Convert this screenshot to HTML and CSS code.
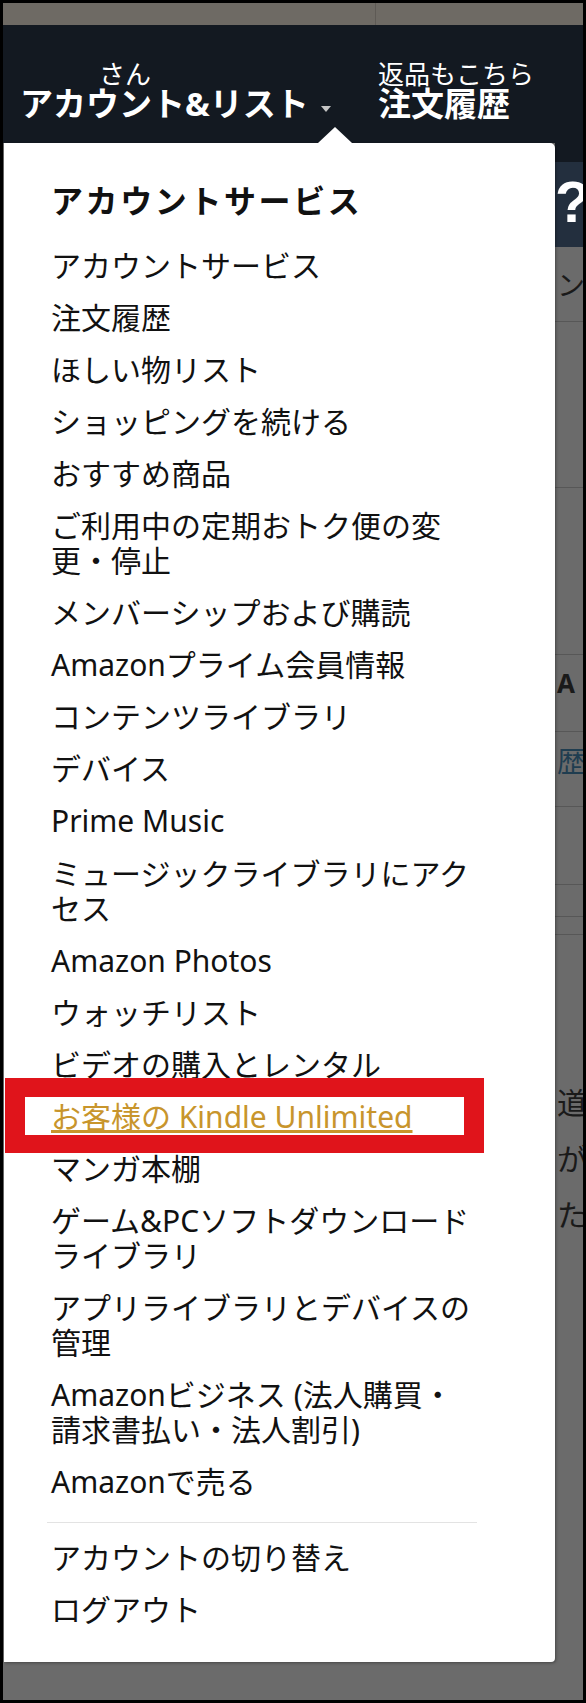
FILE: index.html
```html
<!DOCTYPE html>
<html lang="ja">
<head>
<meta charset="utf-8">
<title>アカウントサービス</title>
<link rel="stylesheet" href="styles.css">
</head>
<body>
<div class="screen">
  <div class="topstrip"><div class="topstrip-a"></div><div class="topstrip-b"></div></div>
  <header class="nav">
    <div class="nav-acct">
      <div class="nav-l1 nav-hello">さん</div>
      <div class="nav-l2">アカウント&amp;リスト<span class="nav-caret"></span></div>
    </div>
    <div class="nav-orders">
      <div class="nav-l1">返品もこちら</div>
      <div class="nav-l2">注文履歴</div>
    </div>
  </header>
  <div class="main">
    <div class="panel">
      <span class="panel-arrow"></span>
      <h2 class="panel-title">アカウントサービス</h2>
      <ul class="menu">
        <li>アカウントサービス</li>
        <li>注文履歴</li>
        <li>ほしい物リスト</li>
        <li>ショッピングを続ける</li>
        <li>おすすめ商品</li>
        <li>ご利用中の定期おトク便の変<br>更・停止</li>
        <li>メンバーシップおよび購読</li>
        <li>Amazonプライム会員情報</li>
        <li>コンテンツライブラリ</li>
        <li>デバイス</li>
        <li>Prime Music</li>
        <li>ミュージックライブラリにアク<br>セス</li>
        <li>Amazon Photos</li>
        <li>ウォッチリスト</li>
        <li>ビデオの購入とレンタル</li>
        <li><span class="menu-link">お客様の Kindle Unlimited</span></li>
        <li>マンガ本棚</li>
        <li>ゲーム&amp;PCソフトダウンロード<br>ライブラリ</li>
        <li>アプリライブラリとデバイスの<br>管理</li>
        <li>Amazonビジネス (法人購買・<br>請求書払い・法人割引)</li>
        <li>Amazonで売る</li>
        <li class="menu-divider" aria-hidden="true"></li>
        <li>アカウントの切り替え</li>
        <li>ログアウト</li>
      </ul>
      <div class="highlight"></div>
    </div>
    <div class="side">
      <div class="side-sec s-nav1"></div>
      <div class="side-sec s-nav2">?</div>
      <div class="side-sec s-a">ン</div>
      <div class="side-sec s-b"></div>
      <div class="side-sec s-c"></div>
      <div class="side-sec s-d">A</div>
      <div class="side-sec s-e">歴</div>
      <div class="side-sec s-f"></div>
      <div class="side-sec s-g"></div>
      <div class="side-sec s-h"></div>
      <div class="side-sec s-i">
        <div class="frag">道</div>
        <div class="frag">が</div>
        <div class="frag">た</div>
      </div>
    </div>
  </div>
</div>
</body>
</html>
```

FILE: styles.css
```css
* { box-sizing: border-box; }
html, body { margin: 0; padding: 0; }
body {
  background: #000;
  padding: 3px;
  width: 586px;
  height: 1703px;
  font-family: "Noto Sans", "Noto Sans CJK JP", sans-serif;
}
.screen {
  width: 580px;
  height: 1697px;
  overflow: hidden;
  background: #6b6b6b;
  display: flex;
  flex-direction: column;
}
.topstrip {
  height: 22px;
  flex: none;
  display: flex;
  background: #6e6a64;
}
.topstrip-a { width: 373px; border-right: 1px solid #5e5a55; }
.topstrip-b { flex: 1; }

.nav {
  height: 118px;
  flex: none;
  background: #131921;
  color: #fff;
  display: flex;
  padding: 34px 0 0 17px;
}
.nav-acct { width: 358px; }
.nav-l1 { font-size: 26px; line-height: 30px; white-space: nowrap; }
.nav-hello { padding-left: 79px; }
.nav-l2 { font-size: 33px; line-height: 30px; font-weight: 700; white-space: nowrap; }
.nav-caret {
  display: inline-block;
  margin-left: 12px;
  border-left: 5px solid transparent;
  border-right: 5px solid transparent;
  border-top: 6px solid #c4c4c4;
  vertical-align: 4px;
}

.main { flex: 1; display: flex; align-items: flex-start; }
.panel {
  position: relative;
  margin-left: 1px;
  width: 551px;
  flex: none;
  background: #fff;
  border-radius: 0 5px 4px 0;
  box-shadow: 1px 1px 3px rgba(0, 0, 0, 0.35);
  padding: 38px 0 35px 47px;
  color: #111;
  white-space: nowrap;
}
.panel-arrow {
  position: absolute;
  top: -16px;
  left: 314px;
  border-left: 17px solid transparent;
  border-right: 17px solid transparent;
  border-bottom: 16px solid #fff;
}
.panel-title {
  margin: 0 0 26.5px;
  font-size: 32px;
  line-height: 40px;
  font-weight: 700;
  letter-spacing: 2.6px;
}
.menu {
  list-style: none;
  margin: 0;
  padding: 0;
  display: flex;
  flex-direction: column;
  gap: 17.1px;
  font-size: 30px;
  line-height: 35px;
}
.menu-link { color: #c8952c; text-decoration: underline; }
.menu-divider {
  height: 1px;
  width: 430px;
  margin: 5.4px 0 0 -4px;
  background: #e3e3e3;
}
.highlight {
  position: absolute;
  left: 1px;
  top: 935px;
  width: 479px;
  height: 75px;
  border-style: solid;
  border-color: #e0141b;
  border-width: 19px 20px 18px 20px;
}

.side {
  width: 28px;
  flex: none;
  align-self: stretch;
  display: flex;
  flex-direction: column;
  overflow: hidden;
  white-space: nowrap;
}
.side-sec {
  flex: none;
  border-bottom: 1px solid #575757;
  padding-left: 2px;
  color: #1a1a1a;
  font-size: 28px;
  line-height: 30px;
  overflow: hidden;
}
.s-nav1 { height: 19px; background: #131921; border-bottom: 0; }
.s-nav2 {
  height: 85px;
  background: #232f3e;
  border-bottom: 0;
  color: #fff;
  font-family: "Liberation Sans", sans-serif;
  font-weight: 700;
  font-size: 58px;
  line-height: 58px;
  padding: 11px 0 0 0;
}
.s-a { height: 75px; padding-top: 23px; }
.s-b { height: 166px; }
.s-c { height: 167px; }
.s-d { height: 77px; padding-top: 13px; font-weight: 700; font-size: 26px; }
.s-e { height: 75px; padding-top: 14px; color: #1f3d50; }
.s-f { height: 78px; }
.s-g { height: 32px; }
.s-h { height: 18px; }
.s-i { flex: 1; border-bottom: 0; padding-top: 140px; font-size: 30px; }
.frag { line-height: 56px; }
```
